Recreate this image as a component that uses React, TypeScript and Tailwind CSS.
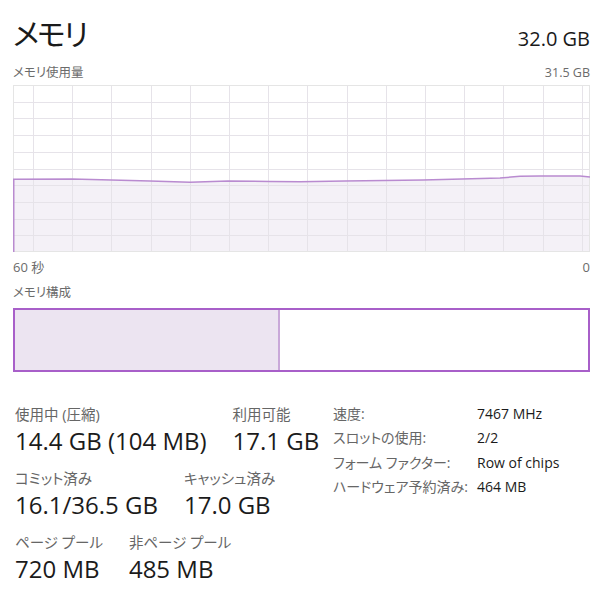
const jp = "font-['Open_Sans','Noto_Sans_CJK_JP',sans-serif] [font-feature-settings:'palt']";

const usage: [number, number][] = [
  [0, 94.3], [59, 94], [98, 95], [137, 96], [177, 97.3], [215, 96], [257, 96.5], [287, 96.7],
  [332, 96], [371, 95.5], [410, 95], [449, 94], [487, 93], [507, 91.3], [527, 91], [567, 91], [577, 92],
];

function UsageChart() {
  const w = 577;
  const h = 167;
  const line = usage.map(([x, y], i) => `${i ? "L" : "M"}${x} ${y}`).join(" ");
  return (
    <svg width={w} height={h} className="block">
      <path d={`${line} L${w} ${h} L0 ${h} Z`} fill="#f4f1f7" />
      {Array.from({ length: 15 }, (_, k) => {
        const x = Math.round(20 + 39.2 * k) + 0.5;
        return <line key={"v" + k} x1={x} y1={0} x2={x} y2={h} stroke="#e6e3e9" strokeWidth={1} />;
      })}
      {Array.from({ length: 9 }, (_, k) => {
        const y = Math.round(16.7 * (k + 1)) + 0.5;
        return <line key={"h" + k} x1={0} y1={y} x2={w} y2={y} stroke="#e6e3e9" strokeWidth={1} />;
      })}
      <rect x={0.5} y={0.5} width={w - 1} height={h - 1} fill="none" stroke="#e5e5e5" />
      <path d={line} fill="none" stroke="#b98bd0" strokeWidth={1.5} />
      <line x1={0.75} y1={94.3} x2={0.75} y2={h} stroke="#b98bd0" strokeWidth={1.5} />
    </svg>
  );
}

function Stat({ label, value }: { label: string; value: string }) {
  return (
    <div className="flex flex-col">
      <div className="h-[20px] leading-[20px] text-[14.5px] text-[#666]">{label}</div>
      <div className="h-[30px] leading-[30px] text-[24px] text-[#1b1b1b] mt-[1px] whitespace-nowrap">{value}</div>
    </div>
  );
}

const specs = [
  ["速度:", "7467 MHz"],
  ["スロットの使用:", "2/2"],
  ["フォーム ファクター:", "Row of chips"],
  ["ハードウェア予約済み:", "464 MB"],
];

export default function App() {
  return (
    <div className={`w-[600px] h-[594px] bg-white pl-[13px] pr-[10px] pt-[14px] overflow-hidden ${jp}`}>
      {/* Header */}
      <div className="flex justify-between items-end h-[40px]">
        <h1 className="text-[30px] leading-[40px] tracking-[-2px] text-[#1a1a1a] font-normal">メモリ</h1>
        <span className="text-[20px] leading-[30px] text-[#1a1a1a]">32.0 GB</span>
      </div>
      <div className="flex justify-between mt-[11px] h-[16px] leading-[16px] text-[12.5px] text-[#6b6b6b]">
        <span>メモリ使用量</span>
        <span>31.5 GB</span>
      </div>

      {/* Usage graph */}
      <div className="mt-[4px]">
        <UsageChart />
      </div>
      <div className="flex justify-between mt-[7px] h-[16px] leading-[16px] text-[13px] text-[#6b6b6b]">
        <span>60 秒</span>
        <span>0</span>
      </div>

      {/* Composition */}
      <div className="mt-[10px] h-[16px] leading-[16px] text-[12.5px] text-[#6b6b6b]">メモリ構成</div>
      <div className="mt-[7px] h-[64px] w-[577px] border-2 border-[#a85fc9] flex">
        <div className="w-[265px] h-full bg-[#ece4f1] border-r-2 border-[#c9a8d9]" />
        <div className="flex-1 bg-white" />
      </div>

      {/* Stats */}
      <div className="mt-[33px] flex">
        <div className="w-[320px] pl-[2px] flex flex-col gap-[13px]">
          <div className="flex gap-[26px]">
            <Stat label="使用中 (圧縮)" value="14.4 GB (104 MB)" />
            <Stat label="利用可能" value="17.1 GB" />
          </div>
          <div className="flex gap-[26px]">
            <Stat label="コミット済み" value="16.1/36.5 GB" />
            <Stat label="キャッシュ済み" value="17.0 GB" />
          </div>
          <div className="flex gap-[26px]">
            <Stat label="ページ プール" value="720 MB" />
            <Stat label="非ページ プール" value="485 MB" />
          </div>
        </div>
        <div className="-mt-[3px] flex flex-col text-[14px] leading-[24.3px]">
          {specs.map(([k, v]) => (
            <div key={k} className="flex">
              <span className="w-[144px] text-[#666]">{k}</span>
              <span className="text-[#1b1b1b]">{v}</span>
            </div>
          ))}
        </div>
      </div>
    </div>
  );
}
